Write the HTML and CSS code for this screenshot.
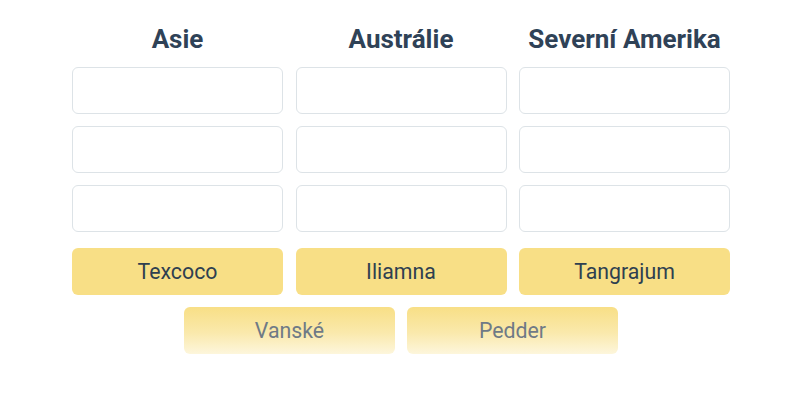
FILE: index.html
```html
<!DOCTYPE html>
<html>
<head>
<meta charset="utf-8">
<link rel="stylesheet" href="styles.css">
</head>
<body>
<div class="board">
  <div class="grid">
    <h2 class="head">Asie</h2>
    <h2 class="head">Austrálie</h2>
    <h2 class="head">Severní Amerika</h2>
    <div class="slot"></div><div class="slot"></div><div class="slot"></div>
    <div class="slot"></div><div class="slot"></div><div class="slot"></div>
    <div class="slot"></div><div class="slot"></div><div class="slot"></div>
    <div class="chip first">Texcoco</div>
    <div class="chip first">Iliamna</div>
    <div class="chip first">Tangrajum</div>
  </div>
  <div class="pool">
    <div class="chip faded">Vanské</div>
    <div class="chip faded">Pedder</div>
  </div>
</div>
</body>
</html>
```
FILE: styles.css
```css
html, body {
  margin: 0;
  padding: 0;
  background: #ffffff;
  font-family: Roboto, "Liberation Sans", sans-serif;
}
.board {
  width: 659px;
  margin: 0 auto;
  padding-top: 23px;
  display: flex;
  flex-direction: column;
  align-items: center;
  transform: translateX(1px);
}
.grid {
  display: grid;
  grid-template-columns: 211px 211px 211px;
  column-gap: 12.5px;
  row-gap: 12px;
}
.head {
  margin: 1px 0 1px 0;
  text-align: center;
  font-size: 26px;
  line-height: 30px;
  font-weight: 700;
  color: #2f4257;
}
.slot {
  height: 47px;
  box-sizing: border-box;
  border: 1px solid #dde3e7;
  border-radius: 6px;
  background: #fff;
}
.chip {
  height: 47px;
  box-sizing: border-box;
  border-radius: 6px;
  background: #f8df86;
  color: #2f3f50;
  font-size: 21.3px;
  display: flex;
  align-items: center;
  justify-content: center;
}
.chip.first {
  margin-top: 4px;
}
.pool {
  display: flex;
  gap: 12px;
  margin-top: 12px;
}
.pool .chip {
  width: 211px;
}
.faded {
  background: linear-gradient(to bottom, #f8df86 0%, #fae9ac 55%, #fdf6dc 100%);
  color: #6f7a86;
}
```
